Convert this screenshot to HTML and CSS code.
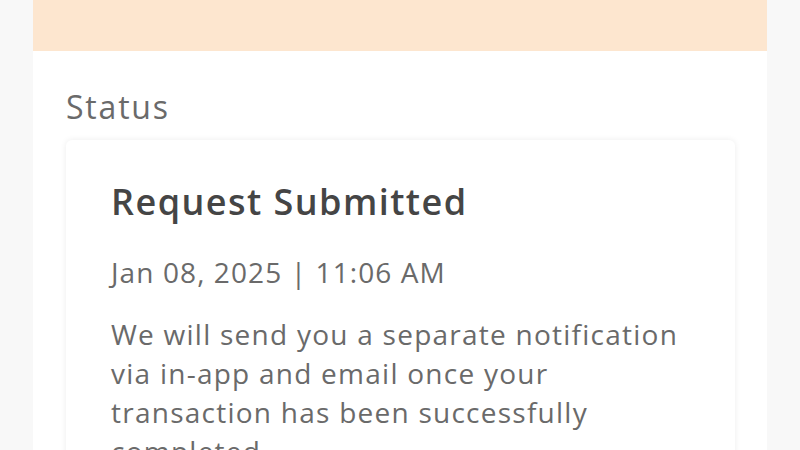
FILE: index.html
```html
<!DOCTYPE html>
<html>
<head>
<meta charset="utf-8">
<link rel="stylesheet" href="styles.css">
</head>
<body>
<div class="page">
  <div class="banner"></div>
  <div class="panel">
    <h2 class="section-title">Status</h2>
    <div class="card">
      <h3 class="card-title">Request Submitted</h3>
      <p class="card-date">Jan 08, 2025 | 11:06 AM</p>
      <p class="card-text">We will send you a separate notification via in-app and email once your transaction has been successfully completed.</p>
    </div>
  </div>
</div>
</body>
</html>
```
FILE: styles.css
```css
html, body {
  margin: 0;
  padding: 0;
  background: #f8f8f8;
  overflow: hidden;
}
body {
  font-family: "Open Sans", "Liberation Sans", sans-serif;
  height: 450px;
}
.page {
  width: 734px;
  margin: 0 auto;
  height: 450px;
  background: #ffffff;
}
.banner {
  height: 51px;
  background: #fde6cf;
}
.panel {
  padding: 34px 32px 0 33px;
}
.section-title {
  margin: 0;
  font-size: 32px;
  font-weight: 400;
  color: #6a6a6a;
  line-height: 44px;
  letter-spacing: 1.8px;
}
.card {
  margin-top: 11px;
  background: #ffffff;
  border-radius: 6px;
  box-shadow: 0 0 6px rgba(0,0,0,0.08);
  padding: 40px 40px 30px 45px;
}
.card-title {
  margin: 0;
  font-size: 36px;
  font-weight: 600;
  color: #454545;
  line-height: 44px;
  letter-spacing: 1.45px;
}
.card-date {
  margin: 28px 0 0;
  font-size: 28px;
  color: #6a6a6a;
  line-height: 40px;
  letter-spacing: 1.1px;
}
.card-text {
  margin: 23px 0 0;
  font-size: 28px;
  color: #6a6a6a;
  line-height: 39px;
  letter-spacing: 1.25px;
}
```
